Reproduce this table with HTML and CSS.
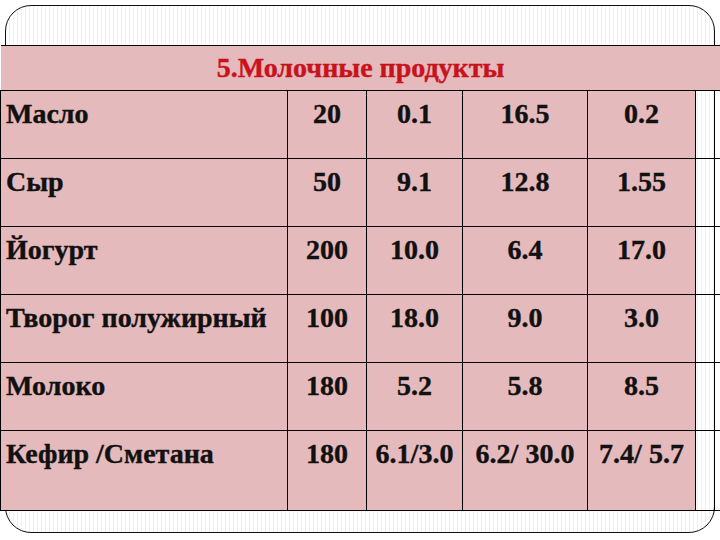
FILE: index.html
```html
<!DOCTYPE html>
<html lang="ru">
<head>
<meta charset="utf-8">
<link rel="stylesheet" href="styles.css">
</head>
<body>
<div class="page">
  <div class="frame"></div>
  <table class="grid">
    <colgroup>
      <col class="c-name"><col class="c-a"><col class="c-b"><col class="c-c"><col class="c-d"><col class="c-e"><col class="c-f">
    </colgroup>
    <tr class="head"><td colspan="7" class="title">5.Молочные продукты</td></tr>
    <tr class="row"><td class="name">Масло</td><td>20</td><td>0.1</td><td>16.5</td><td>0.2</td><td class="blank"></td><td class="blank"></td></tr>
    <tr class="row"><td class="name">Сыр</td><td>50</td><td>9.1</td><td>12.8</td><td>1.55</td><td class="blank"></td><td class="blank"></td></tr>
    <tr class="row"><td class="name">Йогурт</td><td>200</td><td>10.0</td><td>6.4</td><td>17.0</td><td class="blank"></td><td class="blank"></td></tr>
    <tr class="row"><td class="name">Творог полужирный</td><td>100</td><td>18.0</td><td>9.0</td><td>3.0</td><td class="blank"></td><td class="blank"></td></tr>
    <tr class="row"><td class="name">Молоко</td><td>180</td><td>5.2</td><td>5.8</td><td>8.5</td><td class="blank"></td><td class="blank"></td></tr>
    <tr class="row last"><td class="name">Кефир /Сметана</td><td>180</td><td>6.1/3.0</td><td>6.2/ 30.0</td><td>7.4/ 5.7</td><td class="blank"></td><td class="blank"></td></tr>
  </table>
</div>
</body>
</html>
```
FILE: styles.css
```css
html, body {
  margin: 0;
  padding: 0;
  background: #ffffff;
}
.page {
  position: relative;
  width: 720px;
  height: 540px;
  overflow: hidden;
  padding-top: 45px;
  box-sizing: border-box;
}
.frame {
  position: absolute;
  left: 5px;
  top: 5px;
  width: 708px;
  height: 526px;
  border: 1.5px solid #111;
  border-radius: 26px;
  background: repeating-linear-gradient(90deg, #ffffff 0 3px, #eeeeee 3px 4px, #ffffff 4px 7px, #f3f3f3 7px 8px);
}
.grid {
  position: relative;
  width: 720px;
  border-collapse: collapse;
  table-layout: fixed;
  font-family: "Liberation Serif", "Times New Roman", serif;
  font-weight: bold;
  font-size: 28px;
  line-height: 32px;
  color: #111;
  -webkit-text-stroke: 0.4px #111;
}
.c-name { width: 287px; }
.c-a { width: 79px; }
.c-b { width: 96px; }
.c-c { width: 125px; }
.c-d { width: 108px; }
.c-e { width: 19px; }
.c-f { width: 6px; }
.grid td {
  border: 1px solid #000;
  background: #e5babd;
  text-align: center;
  vertical-align: top;
  padding: 7px 0 0 0;
  white-space: nowrap;
  overflow: visible;
}
.grid tr.head td {
  height: 44px;
  padding: 0;
  vertical-align: middle;
  border-left: none;
  border-right: none;
}
.title {
  color: #c8121c;
  font-size: 28px;
  -webkit-text-stroke: 0.4px #c8121c;
}
.grid tr.row td {
  height: 60px;
}
.grid tr.row.last td {
  height: 72px;
}
.grid td.name {
  text-align: left;
  padding-left: 5px;
  border-left: 1px solid #000;
}
.grid td.blank {
  background: transparent;
}
.grid td.blank:last-child {
  border-right: none;
}
```
